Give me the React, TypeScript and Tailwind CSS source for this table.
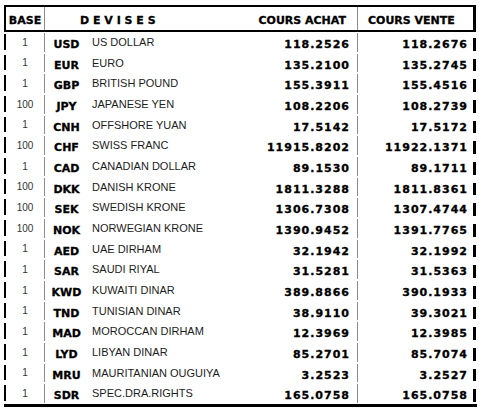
const ROWS = [
  ['1', 'USD', 'US DOLLAR', '118.2526', '118.2676'],
  ['1', 'EUR', 'EURO', '135.2100', '135.2745'],
  ['1', 'GBP', 'BRITISH POUND', '155.3911', '155.4516'],
  ['100', 'JPY', 'JAPANESE YEN', '108.2206', '108.2739'],
  ['1', 'CNH', 'OFFSHORE YUAN', '17.5142', '17.5172'],
  ['100', 'CHF', 'SWISS FRANC', '11915.8202', '11922.1371'],
  ['1', 'CAD', 'CANADIAN DOLLAR', '89.1530', '89.1711'],
  ['100', 'DKK', 'DANISH KRONE', '1811.3288', '1811.8361'],
  ['100', 'SEK', 'SWEDISH KRONE', '1306.7308', '1307.4744'],
  ['100', 'NOK', 'NORWEGIAN KRONE', '1390.9452', '1391.7765'],
  ['1', 'AED', 'UAE DIRHAM', '32.1942', '32.1992'],
  ['1', 'SAR', 'SAUDI RIYAL', '31.5281', '31.5363'],
  ['1', 'KWD', 'KUWAITI DINAR', '389.8866', '390.1933'],
  ['1', 'TND', 'TUNISIAN DINAR', '38.9110', '39.3021'],
  ['1', 'MAD', 'MOROCCAN DIRHAM', '12.3969', '12.3985'],
  ['1', 'LYD', 'LIBYAN DINAR', '85.2701', '85.7074'],
  ['1', 'MRU', 'MAURITANIAN OUGUIYA', '3.2523', '3.2527'],
  ['1', 'SDR', 'SPEC.DRA.RIGHTS', '165.0758', '165.0758'],
]

const heavy = "font-['DejaVu_Sans',sans-serif] font-bold text-[11px] text-black [-webkit-text-stroke:0.3px_black]"

export default function App() {
  return (
    <div className="w-[481px] h-[413px] bg-white overflow-hidden">
      <div className="ml-[4px] pt-[5px] w-[472px]">
        {/* header */}
        <div className="flex h-[27px] border-y-2 border-black">
          <div className="w-[2px] bg-black" />
          <div className={`w-[38px] flex items-center justify-center pt-[6px] ${heavy}`}>BASE</div>
          <div className="w-px bg-[#8c8c8c]" />
          <div className={`flex-1 flex items-center pl-[35px] pt-[6px] ${heavy}`}>D E V I S E S</div>
          <div className={`w-[100px] flex items-center justify-end pr-[11px] pt-[6px] ${heavy}`}>COURS ACHAT</div>
          <div className="w-px bg-[#8c8c8c]" />
          <div className={`w-[115px] flex items-center pl-[10px] pt-[6px] ${heavy}`}>COURS VENTE</div>
          <div className="w-[3px] bg-black" />
        </div>

        {/* rates */}
        {ROWS.map(([base, code, name, buy, sell]) => (
          <div key={code} className="flex h-[20.67px]">
            <div className="w-[2px] pt-[2px] pb-[3px]">
              <div className="h-full bg-black" />
            </div>
            <div className="w-[38px] flex items-center justify-center font-['Liberation_Sans',sans-serif] text-[10px] text-[#333]">
              {base}
            </div>
            <div className="w-px py-[1px]">
              <div className="h-full bg-[#8c8c8c]" />
            </div>
            <div className={`w-[43px] flex items-center justify-center pt-[6px] ${heavy}`}>{code}</div>
            <div className="flex-1 flex items-center pl-[4px] font-['Liberation_Sans',sans-serif] text-[11px] text-[#1c1c1c]">
              {name}
            </div>
            <div className={`w-[100px] flex items-center justify-end pr-[7px] pt-[6px] tracking-[1px] ${heavy}`}>
              {buy}
            </div>
            <div className="w-px py-[1px]">
              <div className="h-full bg-[#8c8c8c]" />
            </div>
            <div className={`w-[115px] flex items-center justify-end pr-[5px] pt-[6px] tracking-[1px] ${heavy}`}>
              {sell}
            </div>
            <div className="w-[3px] pt-[6px] pb-[2px]">
              <div className="h-full bg-black" />
            </div>
          </div>
        ))}

        <div className="h-[3px] w-[473px] bg-black" />
      </div>
    </div>
  )
}
